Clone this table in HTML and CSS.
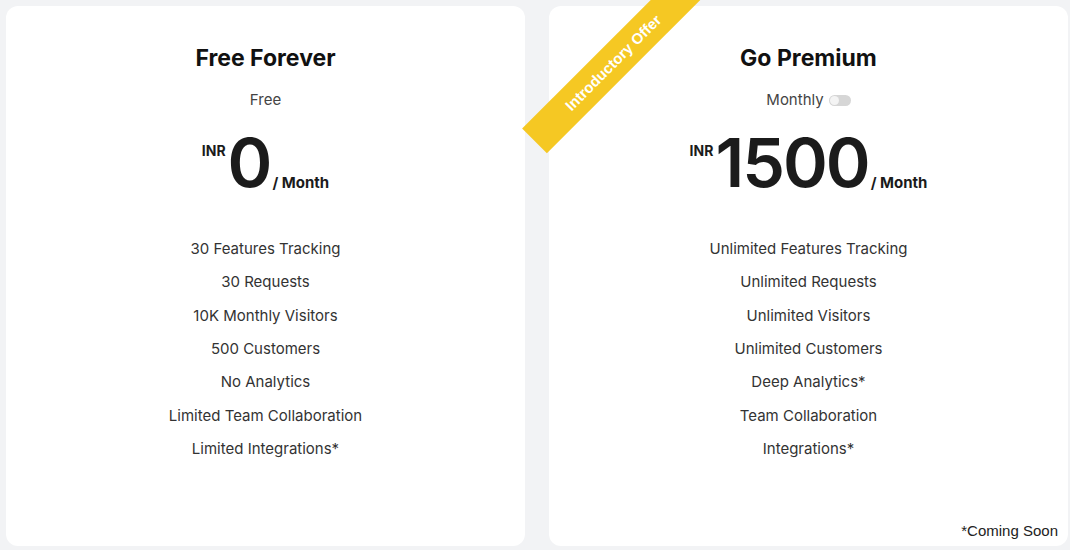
FILE: index.html
```html
<!DOCTYPE html>
<html lang="en">
<head>
<meta charset="utf-8">
<title>Pricing</title>
<link rel="stylesheet" href="styles.css">
</head>
<body>
<main class="page">
  <section class="card">
    <h2 class="title">Free Forever</h2>
    <div class="sub">Free</div>
    <div class="price">
      <span class="cur">INR</span>
      <span class="amount">0</span>
      <span class="per">/ Month</span>
    </div>
    <ul class="features">
      <li>30 Features Tracking</li>
      <li>30 Requests</li>
      <li>10K Monthly Visitors</li>
      <li>500 Customers</li>
      <li>No Analytics</li>
      <li>Limited Team Collaboration</li>
      <li>Limited Integrations*</li>
    </ul>
  </section>
  <section class="card">
    <div class="ribbon">Introductory Offer</div>
    <h2 class="title">Go Premium</h2>
    <div class="sub">Monthly <span class="toggle"><span class="knob"></span></span></div>
    <div class="price">
      <span class="cur">INR</span>
      <span class="amount">1500</span>
      <span class="per">/ Month</span>
    </div>
    <ul class="features">
      <li>Unlimited Features Tracking</li>
      <li>Unlimited Requests</li>
      <li>Unlimited Visitors</li>
      <li>Unlimited Customers</li>
      <li>Deep Analytics*</li>
      <li>Team Collaboration</li>
      <li>Integrations*</li>
    </ul>
    <div class="note">*Coming Soon</div>
  </section>
</main>
</body>
</html>
```
FILE: styles.css
```css
* { box-sizing: border-box; }
html, body { margin: 0; padding: 0; }
body {
  background: #f2f3f5;
  font-family: Inter, "Noto Sans", sans-serif;
  color: #333;
  overflow: hidden;
}
.page {
  display: flex;
  gap: 24px;
  padding: 6px 2px 4px 6px;
  height: 550px;
}
.card {
  flex: 1;
  background: #fff;
  border-radius: 12px;
  position: relative;
  display: flex;
  flex-direction: column;
  align-items: center;
}
.title {
  margin: 39px 0 0;
  font-size: 23px;
  line-height: 26px;
  font-weight: 700;
  color: #111;
}
.sub {
  margin-top: 19px;
  font-size: 15px;
  line-height: 20px;
  color: #444;
  display: flex;
  align-items: center;
  gap: 5px;
}
.toggle {
  display: inline-block;
  width: 22px;
  height: 11px;
  border-radius: 6px;
  background: #d6d6d6;
  position: relative;
}
.knob {
  position: absolute;
  left: 1px;
  top: 1px;
  width: 9px;
  height: 9px;
  border-radius: 50%;
  background: #f4f4f4;
}
.price {
  margin-top: 18px;
  display: flex;
  align-items: flex-end;
  color: #1b1b1b;
}
.cur {
  align-self: flex-start;
  margin-top: 16px;
  font-size: 14px;
  line-height: 14px;
  font-weight: 700;
  margin-right: 2px;
}
.amount {
  font-size: 68px;
  line-height: 68px;
  font-weight: 600;
  letter-spacing: -2px;
}
.per {
  font-size: 15px;
  font-weight: 700;
  line-height: 20px;
  margin-left: 2px;
  margin-bottom: 3px;
}
.features {
  list-style: none;
  margin: 36px 0 0;
  padding: 0;
  text-align: center;
  font-size: 15px;
  line-height: 33.33px;
  color: #333;
}
.ribbon {
  position: absolute;
  left: -47.5px;
  top: 38.5px;
  width: 222px;
  height: 35px;
  background: #f5c823;
  color: #fff;
  font-family: "Liberation Sans", Arial, sans-serif;
  font-weight: 700;
  font-size: 15px;
  line-height: 35px;
  text-align: center;
  transform: rotate(-45deg);
}
.note {
  position: absolute;
  right: 10px;
  bottom: 7px;
  font-family: "Liberation Sans", Arial, sans-serif;
  font-size: 15px;
  color: #222;
}
```
